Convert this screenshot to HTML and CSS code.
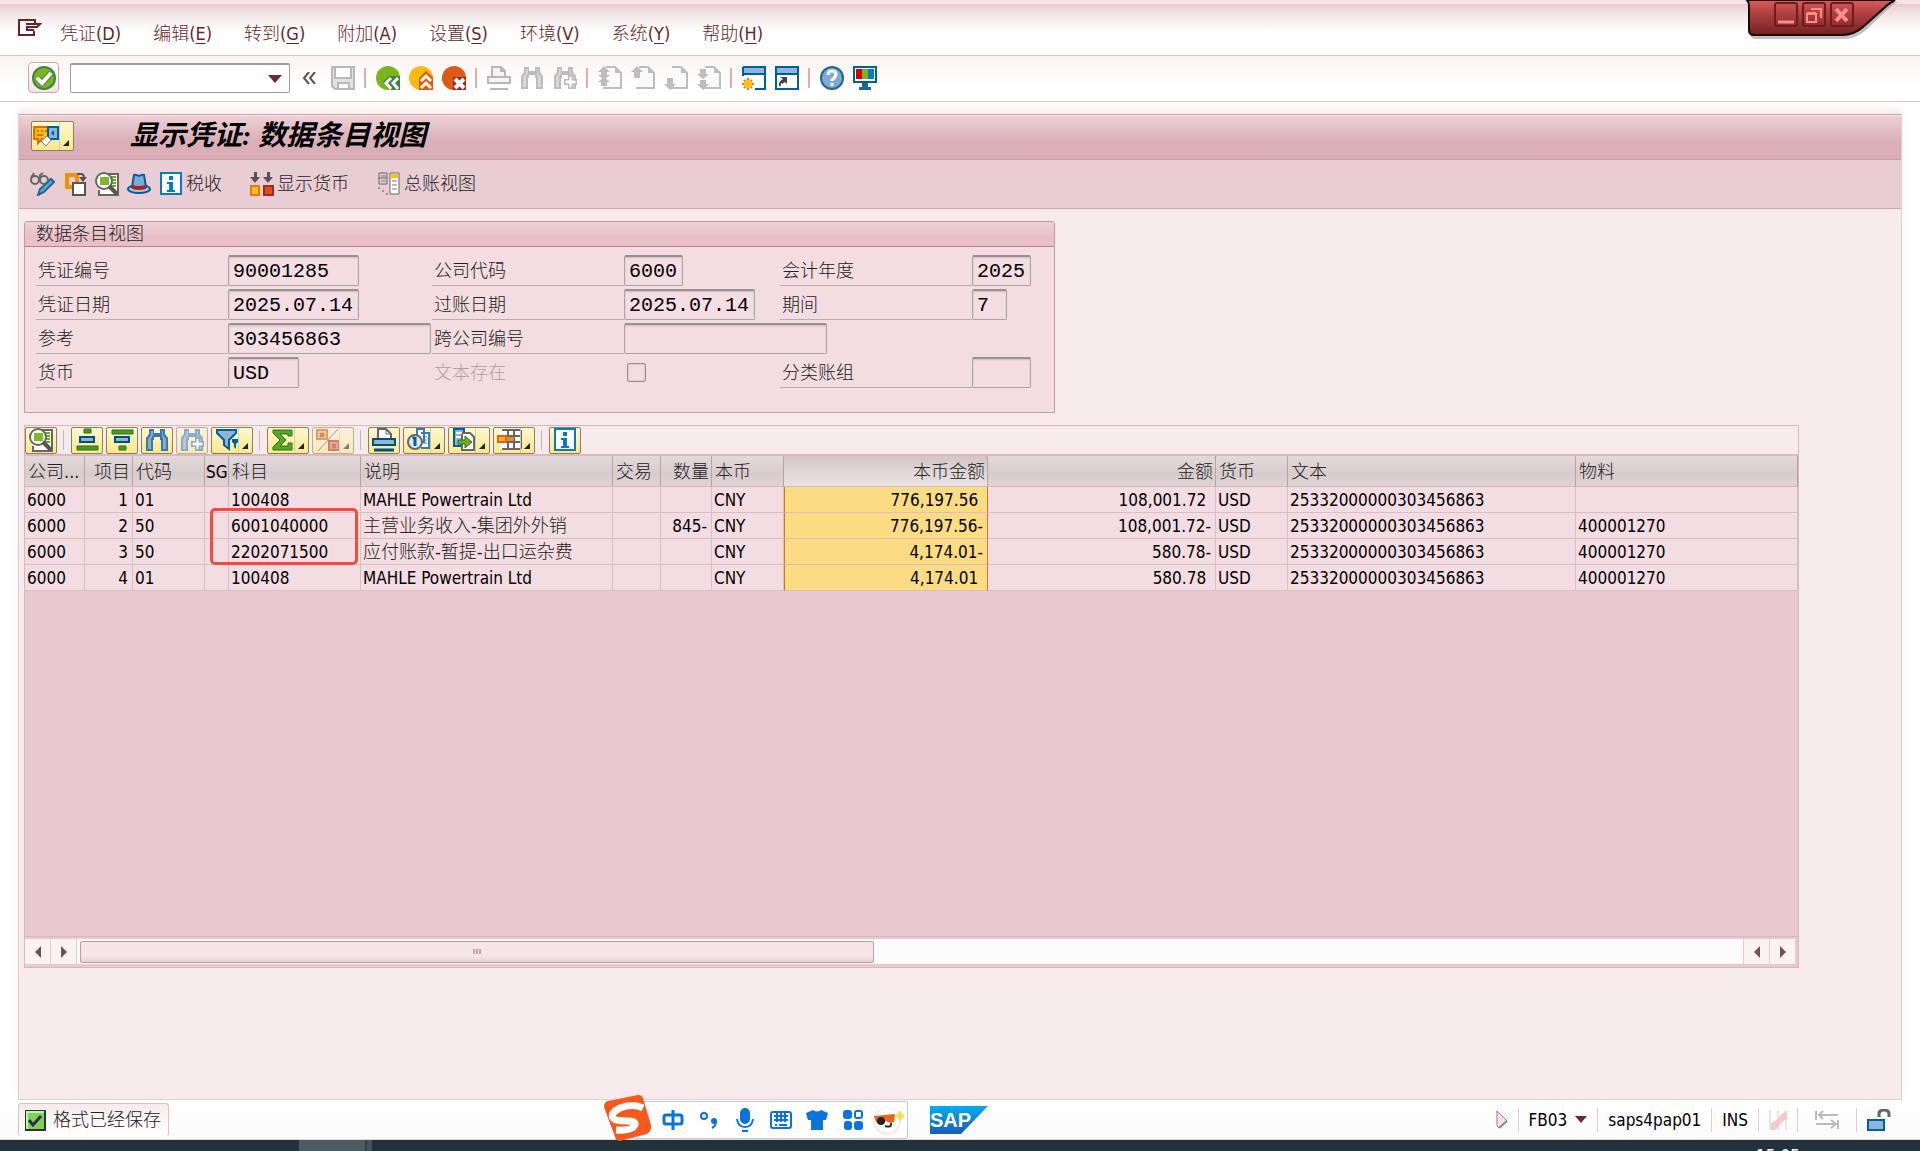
FILE: index.html
```html
<!DOCTYPE html>
<html lang="zh-CN">
<head>
    <meta charset="UTF-8">
    <meta name="viewport" content="width=device-width, initial-scale=1.0">
    <title>显示凭证: 数据条目视图</title>
    <link rel="stylesheet" href="styles.css">
</head>
<body>
    <!-- shared icons -->
    <svg class="sprite" aria-hidden="true">
        <symbol id="binoculars" viewBox="0 0 24 24">
            <path d="M4 1h5v4h6V1h5v5l3 4v13h-7V12h-1V9H9v3H8v11H1V10l3-4z" fill="currentColor"/>
            <path d="M6 3v4L3 11v10h3V11l2-4V3zM17 3v4l1 4v10h3V11l-3-4V3z" fill="#fff" opacity=".4"/>
        </symbol>
        <symbol id="plus" viewBox="0 0 24 24">
            <path d="M15 9h5v4h4v6h-4v4h-5v-4h-4v-6h4z" fill="currentColor"/>
            <path d="M17 11h1v4h4v2h-4v4h-1v-4h-4v-2h4z" fill="#fff" stroke="#fff"/>
        </symbol>
        <symbol id="page" viewBox="0 0 24 24">
            <path d="M8 1h9l6 6v15H5" fill="#fafafa" stroke="#bdbdbd" stroke-width="2"/>
            <path d="M17 1v6h6z" fill="#bdbdbd"/>
        </symbol>
        <symbol id="search" viewBox="0 0 24 24">
            <path d="M12 2h11v21H4v-5" fill="#fff" stroke="#666" stroke-width="2"/>
            <path d="M15 5h6M15 8h6M15 11h6M15 14h6" stroke="#6ab023" stroke-width="2"/>
            <circle cx="9" cy="9" r="8" fill="#fff" stroke="#666" stroke-width="2"/>
            <path d="M5 5h9v8H5z" fill="#7cbb28"/>
            <path d="M14 14l8 8" stroke="#555" stroke-width="4"/>
        </symbol>
        <symbol id="info" viewBox="0 0 24 24">
            <path d="M2 1h20v21H2z" fill="#fff" stroke="#0a7ac0" stroke-width="2"/>
            <path d="M10 4h4v4h-4zM8 10h6v8h2v2H8v-2h2v-6H8z" fill="#0a7ac0"/>
        </symbol>
        <symbol id="left" viewBox="0 0 12 12"><path d="M9 0v12L3 6z" fill="#744e58"/></symbol>
        <symbol id="right" viewBox="0 0 12 12"><path d="M3 0v12l6-6z" fill="#744e58"/></symbol>
    </svg>

    <header class="menubar">
        <button type="button" class="sys" aria-label="系统菜单">
            <svg width="24" height="18" viewBox="0 0 24 18"><path d="M17 4V1H1v15h15v-4M8 5h14l-3 3H9v3h7" fill="none" stroke="#6a2626" stroke-width="2"/></svg>
        </button>
        <nav class="menu">
            <button type="button">凭证<span>(<u>D</u>)</span></button>
            <button type="button">编辑<span>(<u>E</u>)</span></button>
            <button type="button">转到<span>(<u>G</u>)</span></button>
            <button type="button">附加<span>(<u>A</u>)</span></button>
            <button type="button">设置<span>(<u>S</u>)</span></button>
            <button type="button">环境<span>(<u>V</u>)</span></button>
            <button type="button">系统<span>(<u>Y</u>)</span></button>
            <button type="button">帮助<span>(<u>H</u>)</span></button>
        </nav>
        <div class="window-controls">
            <svg class="tab" width="152" height="44" viewBox="0 0 152 44" aria-hidden="true">
                <defs>
                    <linearGradient id="red" x1="0" y1="0" x2="0" y2="1">
                        <stop offset="0" stop-color="#dc5c5c"/>
                        <stop offset=".3" stop-color="#b84646"/>
                        <stop offset="1" stop-color="#741f22"/>
                    </linearGradient>
                </defs>
                <path d="M0 0q4 2 4 8v24q0 7 5 7h89q12 0 22-9l20-19q7-7 12-9z" fill="#999" opacity=".6"/>
                <path d="M0 0q3 1 3 6v24q0 5 5 5h88q12 0 21-8l20-18q6-6 12-9z" fill="url(#red)" stroke="#1c0506" stroke-width="2"/>
            </svg>
            <div class="window-buttons">
                <button type="button" aria-label="最小化"><svg width="22" height="22"><path d="M3 18h16" stroke="#ff8c8c" stroke-width="3"/></svg></button>
                <button type="button" aria-label="还原"><svg width="22" height="22" fill="none" stroke="#ff8c8c" stroke-width="2"><path d="M4 10h9v8H4zM4 9h9M8 5h10v9"/></svg></button>
                <button type="button" aria-label="关闭"><svg width="22" height="22"><path d="M5 5l11 12M16 5L5 17" stroke="#ff8c8c" stroke-width="4"/></svg></button>
            </div>
        </div>
    </header>

    <div class="toolbar">
        <button type="button" class="enter" aria-label="回车">
            <svg width="24" height="24"><circle cx="12" cy="12" r="11" fill="#7ab51d" stroke="#3d8440" stroke-width="2"/><path d="M5 12l5 5 9-10" fill="none" stroke="#3d8440" stroke-width="6"/><path d="M5 12l5 5 9-10" fill="none" stroke="#fff" stroke-width="4"/></svg>
        </button>
        <div class="command">
            <input type="text" aria-label="命令">
            <svg width="14" height="8"><path d="M0 0h14L7 8z" fill="#6e2a2e"/></svg>
        </div>
        <button type="button" class="chevrons" aria-label="收起"><svg width="14" height="12" fill="none" stroke="#555" stroke-width="2"><path d="M7 0L2 6l5 6M13 0L8 6l5 6"/></svg></button>
        <button type="button" aria-label="保存"><svg width="24" height="24"><path d="M1 1h22v22H4l-3-3z" fill="#e2e2e2" stroke="#b8b8b8" stroke-width="2"/><path d="M4 1h16v11H4zM7 17h11v6H7z" fill="#fff" stroke="#b8b8b8" stroke-width="2"/></svg></button>
        <span class="sep"></span>
        <button type="button" aria-label="返回"><svg width="24" height="24"><circle cx="12" cy="12" r="12" fill="#7ab51d"/><path d="M7 16l6-6h11v14H13z" fill="#3d8440"/><path d="M15 12l-5 5 5 6M22 12l-5 5 5 6" fill="none" stroke="#fff" stroke-width="3"/></svg></button>
        <button type="button" aria-label="退出"><svg width="24" height="24"><circle cx="12" cy="12" r="12" fill="#fdb913"/><path d="M10 12l7-7 7 6v13H10z" fill="#e65a0c"/><path d="M12 15l5-5 5 5M12 22l5-5 5 5" fill="none" stroke="#fff" stroke-width="3"/></svg></button>
        <button type="button" aria-label="取消"><svg width="24" height="24"><circle cx="12" cy="12" r="12" fill="#dd5a14"/><path d="M11 11h13v13H11z" fill="#a8281a"/><path d="M13 13l9 9M22 13l-9 9" stroke="#fff" stroke-width="4"/></svg></button>
        <span class="sep"></span>
        <button type="button" aria-label="打印" disabled><svg width="24" height="24" fill="#f4f4f4" stroke="#b8b8b8" stroke-width="2"><path d="M5 11V1h9l4 4v6M14 1v4h4M1 11h22v6H1zM3 23h18"/></svg></button>
        <button type="button" aria-label="查找" disabled><svg width="24" height="24" class="gray"><use href="#binoculars"/></svg></button>
        <button type="button" aria-label="继续查找" disabled><svg width="24" height="24" class="gray"><use href="#binoculars"/><use href="#plus"/></svg></button>
        <span class="sep"></span>
        <button type="button" aria-label="首页" disabled><svg width="24" height="24" class="gray"><use href="#page"/><path d="M6 0l6 6H9v3h3l-6 5-6-5h3V6H0zM6 11l6 5H9v4H3v-4H0z" fill="currentColor"/></svg></button>
        <button type="button" aria-label="上一页" disabled><svg width="24" height="24" class="gray"><use href="#page"/><path d="M6 0l6 6H9v6H3V6H0z" fill="currentColor"/></svg></button>
        <button type="button" aria-label="下一页" disabled><svg width="24" height="24" class="gray"><use href="#page"/><path d="M6 24l6-6H9v-6H3v6H0z" fill="currentColor"/></svg></button>
        <button type="button" aria-label="末页" disabled><svg width="24" height="24" class="gray"><use href="#page"/><path d="M6 13l6-5H9V3H3v5H0zM6 24l6-6H9v-4H3v4H0z" fill="currentColor"/></svg></button>
        <span class="sep"></span>
        <button type="button" aria-label="新建会话"><svg width="24" height="24"><path d="M1 1h22v22H13M1 10V1" fill="#fff" stroke="#00609c" stroke-width="2"/><path d="M2 2h20v5H2z" fill="#8fb5d9"/><path d="M0 8h24" stroke="#00609c" stroke-width="2"/><path d="M6 12v12M0 18h12M2 14l8 8M10 14l-8 8" stroke="#ee7d11" stroke-width="2"/><circle cx="6" cy="18" r="4" fill="#fdc010"/></svg></button>
        <button type="button" aria-label="快捷方式"><svg width="24" height="24"><path d="M1 1h22v22H1z" fill="#fff" stroke="#00609c" stroke-width="2"/><path d="M2 2h20v5H2z" fill="#8fb5d9"/><path d="M0 8h24" stroke="#00609c" stroke-width="2"/><path d="M5 20q-1-4 4-6" fill="none" stroke="#444" stroke-width="2"/><path d="M5 11h7v7l-2-2-3 2-1-3 2-2z" fill="#444"/></svg></button>
        <span class="sep"></span>
        <button type="button" aria-label="帮助"><svg width="24" height="24"><circle cx="12" cy="12" r="11" fill="#7fa9d0" stroke="#20669b" stroke-width="2"/><path d="M8 9q0-4 4-4t4 3-4 6v1M12 17v3" fill="none" stroke="#fff" stroke-width="3"/></svg></button>
        <button type="button" aria-label="布局"><svg width="24" height="24"><path d="M1 1h22v15H1z" fill="#fff" stroke="#00609c" stroke-width="2"/><path d="M3 3h6v10H3z" fill="#d40000"/><path d="M9 3h6v10H9z" fill="#7ab51d"/><path d="M15 3h6v10h-6z" fill="#0a7ac8"/><path d="M9 17h6v4h3v3H6v-3h3z" fill="#20669b"/></svg></button>
    </div>

    <main class="frame">
        <div class="title-bar">
            <button type="button" class="yellow wide" aria-label="对象服务">
                <svg width="26" height="22"><path d="M1 2h14v12H9l-4 4v-4H1z" fill="#fdc010" stroke="#e06a10" stroke-width="2"/><path d="M4 6h2m2 0h2m2 0h2M4 10h6" stroke="#e06a10" stroke-width="2"/><path d="M15 2h10v12H15z" fill="#8fb5d9" stroke="#00609c" stroke-width="2"/><path d="M21 5l-3 3 3 3" fill="#00609c"/><path d="M8 16l6-5 4 4-5 6z" fill="#fff" stroke="#777"/></svg>
                <i></i>
            </button>
            <h1>显示凭证: 数据条目视图</h1>
        </div>

        <div class="app-bar">
            <button type="button" aria-label="显示/更改"><svg width="25" height="24" fill="none" stroke="#666" stroke-width="2"><circle cx="5" cy="8" r="4"/><circle cx="14" cy="8" r="4"/><path d="M1 6l3-5M10 7V3l3-2"/><path d="M8 23l2-6L21 7l3 3-10 10z" fill="#5fa3cf" stroke="#206a98"/></svg></button>
            <button type="button" aria-label="其他凭证"><svg width="24" height="24"><path d="M2 1h14v16H2z" fill="#f39200"/><path d="M6 5h6v8H6z" fill="#e9cdd4"/><path d="M10 11h12v12H10z" fill="#fff" stroke="#555" stroke-width="2"/><path d="M14 2h4q3 0 3 4" fill="none" stroke="#555" stroke-width="2"/><path d="M16 5h8l-4 5z" fill="#555"/></svg></button>
            <button type="button" aria-label="选择单项"><svg width="24" height="24"><use href="#search"/></svg></button>
            <button type="button" aria-label="显示凭证抬头"><svg width="24" height="24"><ellipse cx="12" cy="17" rx="11" ry="4" fill="#a8cbe7" stroke="#00609c" stroke-width="2"/><path d="M5 15L7 3q2-1 5 1 3-2 5-1l2 12z" fill="#79abd5" stroke="#00609c" stroke-width="2"/><path d="M5 13q7 2 14 0v4q-7 2-14 0z" fill="#b02020"/></svg></button>
            <button type="button" class="text-button"><svg width="24" height="24"><use href="#info"/></svg>税收</button>
            <button type="button" class="text-button far"><svg width="24" height="24"><path d="M4 0h3v5h3l-5 6-5-6h4zM17 0h3v5h3l-5 6-5-6h4z" fill="#555"/><path d="M1 14h8v9H1z" fill="#fdc010" stroke="#e67a14" stroke-width="2"/><path d="M14 14h9v9h-9z" fill="#d6531a" stroke="#a8281a" stroke-width="2"/></svg>显示货币</button>
            <button type="button" class="text-button far"><svg width="24" height="24"><path d="M2 1h8v11H2zM2 6h8" fill="none" stroke="#666"/><path d="M13 1h9v21h-9z" fill="#fff" stroke="#666"/><path d="M14 2h7v4h-7z" fill="#fdc010"/><path d="M4 9h5M4 4h5M15 9h5m-5 4h5m-5 4h5" stroke="#777"/><path d="M1 16h2m2 3h2m2 3h2" stroke="#555"/></svg>总账视图</button>
        </div>

        <div class="content">
            <form class="panel">
                <h2>数据条目视图</h2>
                <div class="fields">
                    <div class="field"><label for="doc">凭证编号</label><input id="doc" class="w10" type="text" value="90001285" readonly></div>
                    <div class="field"><label for="comp">公司代码</label><input id="comp" class="w4" type="text" value="6000" readonly></div>
                    <div class="field"><label for="year">会计年度</label><input id="year" class="w4" type="text" value="2025" readonly></div>

                    <div class="field"><label for="docdate">凭证日期</label><input id="docdate" class="w10" type="text" value="2025.07.14" readonly></div>
                    <div class="field"><label for="postdate">过账日期</label><input id="postdate" class="w10" type="text" value="2025.07.14" readonly></div>
                    <div class="field"><label for="period">期间</label><input id="period" class="w2" type="text" value="7" readonly></div>

                    <div class="field"><label for="ref">参考</label><input id="ref" class="w16" type="text" value="303456863" readonly></div>
                    <div class="field"><label for="cross">跨公司编号</label><input id="cross" class="w16" type="text" readonly></div>
                    <div></div>

                    <div class="field"><label for="curr">货币</label><input id="curr" class="w5" type="text" value="USD" readonly></div>
                    <div class="field off"><label for="texts">文本存在</label><input id="texts" type="checkbox" disabled></div>
                    <div class="field"><label for="ledger">分类账组</label><input id="ledger" class="w4" type="text" readonly></div>
                </div>
            </form>

            <section class="alv">
                <div class="alv-bar">
                    <button type="button" class="yellow" aria-label="明细"><svg width="24" height="24"><use href="#search"/></svg></button>
                    <span class="sep"></span>
                    <button type="button" class="yellow" aria-label="升序"><svg width="24" height="24"><path d="M9 1h7v4H9z" fill="#4a9a20" stroke="#2d6e1c"/><path d="M5 9h14v5H5z" fill="#8fb5d9" stroke="#00507c" stroke-width="2"/><path d="M2 18h21v4H2z" fill="#4a9a20" stroke="#2d6e1c"/></svg></button>
                    <button type="button" class="yellow" aria-label="降序"><svg width="24" height="24"><path d="M2 2h21v4H2z" fill="#4a9a20" stroke="#2d6e1c"/><path d="M5 9h14v5H5z" fill="#8fb5d9" stroke="#00507c" stroke-width="2"/><path d="M9 18h7v4H9z" fill="#4a9a20" stroke="#2d6e1c"/></svg></button>
                    <button type="button" class="yellow" aria-label="查找"><svg width="24" height="24" class="blue"><use href="#binoculars"/></svg></button>
                    <button type="button" class="yellow pale" aria-label="继续查找" disabled><svg width="24" height="24" class="blue"><use href="#binoculars"/><use href="#plus"/></svg></button>
                    <button type="button" class="yellow wide" aria-label="过滤"><svg width="24" height="24"><path d="M2 2h19v3l-7 7v9l-5-4v-5L2 5z" fill="#8fb5d9" stroke="#00609c" stroke-width="2"/><path d="M17 11h6v3l-2 2v5l-2-2v-3l-2-2z" fill="#00609c"/></svg><i></i></button>
                    <span class="sep"></span>
                    <button type="button" class="yellow wide" aria-label="总计"><svg width="24" height="24"><path d="M2 2h19v6h-4V6H9l6 6-6 6h8v-3h4v7H2v-3l7-7-7-7z" fill="#5aa81e" stroke="#2d6e1c"/></svg><i></i></button>
                    <button type="button" class="yellow wide pale" aria-label="小计" disabled><svg width="24" height="24"><path d="M1 2h10v9H1z" fill="#fdc010" stroke="#d6531a" stroke-width="2"/><path d="M13 13h10v9H13z" fill="#e67a4a" stroke="#a8281a" stroke-width="2"/><path d="M4 5l4 4m0-4L4 9m12 7l4 4m0-4l-4 4" stroke="#a8281a" stroke-width="2"/><path d="M22 1L2 23" stroke="#555"/></svg><i></i></button>
                    <span class="sep"></span>
                    <button type="button" class="yellow" aria-label="打印"><svg width="24" height="24"><path d="M6 11V1h8l5 5v5" fill="#fff" stroke="#666" stroke-width="2"/><path d="M14 1v5h5" fill="none" stroke="#666"/><path d="M1 11h22v6H1z" fill="#8fb5d9" stroke="#00507c" stroke-width="2"/><path d="M2 22h20" stroke="#00507c" stroke-width="3"/></svg></button>
                    <button type="button" class="yellow wide" aria-label="视图"><svg width="24" height="24"><path d="M10 1h7v13h-7zM14 5h8v15h-8" fill="#fff" stroke="#3979ac" stroke-width="2"/><path d="M16 9h4m-4 3h4m-4 3h4" stroke="#3979ac"/><circle cx="8" cy="14" r="7" fill="#dbe9f4" stroke="#666" stroke-width="2"/><path d="M8 9v9M6 11l2-2" stroke="#00609c" stroke-width="3"/></svg><i></i></button>
                    <button type="button" class="yellow wide" aria-label="导出"><svg width="24" height="24"><path d="M2 1h10v17H2z" fill="#8fb5d9" stroke="#00609c" stroke-width="2"/><path d="M10 5h8l4 4v13H10z" fill="#fff" stroke="#666" stroke-width="2"/><path d="M4 5h6M4 9h5" stroke="#fff" stroke-width="2"/><path d="M6 12h7V8l7 6-7 6v-4H6z" fill="#6ab023" stroke="#2d6e1c"/></svg><i></i></button>
                    <button type="button" class="yellow wide" aria-label="布局"><svg width="25" height="24"><path d="M3 2h21v19H3z" fill="#fff"/><path d="M5 2h19M5 8h19M5 14h19M5 21h19M11 2v19M17 2v19M24 2v19" stroke="#666" stroke-width="2"/><path d="M1 8h8v6H1z" fill="#fdb913" stroke="#e0631a" stroke-width="2"/><path d="M10 9h7v4h-7z" fill="#f18a20"/></svg><i></i></button>
                    <span class="sep"></span>
                    <button type="button" class="yellow" aria-label="信息"><svg width="24" height="24"><use href="#info"/></svg></button>
                </div>

                <div class="grid">
                    <table>
                        <colgroup>
                            <col class="c60"><col class="c48"><col class="c72"><col class="c24"><col class="c132"><col class="c252"><col class="c48"><col class="c51"><col class="c72"><col class="c204"><col class="c228"><col class="c72"><col class="c288"><col>
                        </colgroup>
                        <thead>
                            <tr>
                                <th>公司...</th><th class="num">项目</th><th>代码</th><th class="latin">SG</th><th>科目</th><th>说明</th><th>交易</th><th class="num">数量</th><th>本币</th><th class="num marked">本币金额</th><th class="num">金额</th><th>货币</th><th>文本</th><th>物料</th>
                            </tr>
                        </thead>
                        <tbody>
                            <tr>
                                <td>6000</td><td class="num">1</td><td>01</td><td></td><td>100408</td><td>MAHLE Powertrain Ltd</td><td></td><td></td><td>CNY</td><td class="num marked">776,197.56&nbsp;</td><td class="num">108,001.72&nbsp;</td><td>USD</td><td>25332000000303456863</td><td></td>
                            </tr>
                            <tr>
                                <td>6000</td><td class="num">2</td><td>50</td><td></td><td>6001040000</td><td class="cn">主营业务收入-集团外外销</td><td></td><td class="num">845-</td><td>CNY</td><td class="num marked">776,197.56-</td><td class="num">108,001.72-</td><td>USD</td><td>25332000000303456863</td><td>400001270</td>
                            </tr>
                            <tr>
                                <td>6000</td><td class="num">3</td><td>50</td><td></td><td>2202071500</td><td class="cn">应付账款-暂提-出口运杂费</td><td></td><td></td><td>CNY</td><td class="num marked">4,174.01-</td><td class="num">580.78-</td><td>USD</td><td>25332000000303456863</td><td>400001270</td>
                            </tr>
                            <tr>
                                <td>6000</td><td class="num">4</td><td>01</td><td></td><td>100408</td><td>MAHLE Powertrain Ltd</td><td></td><td></td><td>CNY</td><td class="num marked">4,174.01&nbsp;</td><td class="num">580.78&nbsp;</td><td>USD</td><td>25332000000303456863</td><td>400001270</td>
                            </tr>
                        </tbody>
                    </table>
                    <div class="highlight"></div>
                </div>

                <div class="scrollbar">
                    <button type="button" aria-label="向左"><svg width="12" height="12"><use href="#left"/></svg></button>
                    <button type="button" aria-label="向右"><svg width="12" height="12"><use href="#right"/></svg></button>
                    <div class="track"><div class="thumb"><span></span></div></div>
                    <button type="button" aria-label="向左"><svg width="12" height="12"><use href="#left"/></svg></button>
                    <button type="button" aria-label="向右"><svg width="12" height="12"><use href="#right"/></svg></button>
                </div>
            </section>
        </div>
    </main>

    <footer class="status">
        <div class="message">
            <svg width="21" height="21"><path d="M0 0h21v21H0z" fill="#2c3045"/><path d="M1 1h18v18H1z" fill="#bdf59c"/><path d="M3 3h16v16H3z" fill="#83cf58"/><path d="M4 10l4 5 8-9" fill="none" stroke="#2c3045" stroke-width="3"/></svg>
            格式已经保存
        </div>

        <div class="system">
            <svg width="12" height="19"><path d="M1 1l10 10-8 7-2-2z" fill="#f9e4e8" stroke="#b2707c"/><path d="M3 18l8-7" stroke="#888" stroke-width="2"/></svg>
            <span class="sep"></span>
            <button type="button">FB03<svg width="12" height="8"><path d="M0 0h12L6 7z" fill="#6e2a2e"/></svg></button>
            <span class="sep"></span>
            <span>saps4pap01</span>
            <span class="sep"></span>
            <span>INS</span>
            <span class="sep"></span>
            <svg width="18" height="20"><path d="M1 0v20M9 0v20M17 0v20" stroke="#e8e3e4" stroke-width="2"/><path d="M2 20v-7q4-1 8-6t8-5v7q-3 1-7 6t-6 5z" fill="#f5c7cd"/></svg>
            <span class="sep"></span>
            <svg class="tabs" width="24" height="20" fill="none" stroke="#bbb" stroke-width="2"><path d="M1 1v9M3 5h20M8 1L4 5l4 4M23 10v9M1 14h20M16 10l5 4-5 4"/></svg>
            <span class="sep"></span>
            <svg width="24" height="22"><path d="M12 8V5q0-4 5-4t5 4v3" fill="none" stroke="#666" stroke-width="3"/><path d="M1 11h16v10H1z" fill="#8fb5d9" stroke="#00609c" stroke-width="2"/></svg>
        </div>

        <!-- floating input method bar and logo -->
        <div class="ime">
            <svg class="s-logo" width="48" height="46"><path d="M4 6L34 0q4 0 5 3l8 27q1 6-4 9l-27 7q-4 0-5-4L0 12q0-5 4-6z" fill="#f55a1c"/><path d="M39 13Q29 8 16 13q-10 5-7 10 2 3 14 3 9 0 8 4-3 6-19 5" fill="none" stroke="#fff" stroke-width="7"/></svg>
            <div class="ime-icons">
                <svg width="22" height="22" fill="none" stroke="#0a74dc" stroke-width="3"><rect x="2" y="6" width="18" height="9" rx="2"/><path d="M11 1v20"/></svg>
                <svg width="18" height="22"><circle cx="4" cy="7" r="3" fill="none" stroke="#0a74dc" stroke-width="2"/><circle cx="14" cy="12" r="3" fill="#0a74dc"/><path d="M16 12q0 5-4 7" fill="none" stroke="#0a74dc" stroke-width="2"/></svg>
                <svg width="18" height="24" fill="none" stroke="#0a74dc" stroke-width="2"><rect x="5" y="1" width="8" height="14" rx="4" fill="#0a74dc"/><path d="M1 11q1 8 8 8t8-8M6 23h6"/></svg>
                <svg width="22" height="20" fill="none" stroke="#0a74dc" stroke-width="2"><rect x="1" y="2" width="20" height="16" rx="2"/><path d="M4 6h14M4 10h14M7 3v9M11 3v9M15 3v9M5 15h2m2 0h8"/></svg>
                <svg width="22" height="22"><path d="M7 1q4 3 8 0l7 3-2 7h-3v10H5V11H2L0 4z" fill="#0a74dc"/></svg>
                <svg width="20" height="20" fill="#0a74dc"><rect width="9" height="9" rx="3"/><rect x="1" y="11" width="8" height="9" rx="3"/><rect x="11" y="11" width="9" height="9" rx="3"/><rect x="12" y="1" width="7" height="7" rx="2" fill="none" stroke="#0a74dc" stroke-width="2"/></svg>
                <svg width="32" height="30"><circle cx="14" cy="16" r="14" fill="#f7ecec"/><circle cx="14" cy="15" r="12" fill="#fff"/><path d="M1 11q10-1 21-2l-1 8q-5 2-8-1-5 4-10 1z" fill="#ec641c"/><circle cx="8" cy="16" r="4" fill="#29231f"/><path d="M12 21q7 2 6-3" fill="none" stroke="#333" stroke-width="2"/><path d="M27 5l2 4 3 2-3 2-2 4-2-4-3-2 3-2z" fill="#fddc45"/></svg>
            </div>
        </div>
        <svg class="sap" width="58" height="28" viewBox="0 0 58 28" role="img" aria-label="SAP">
            <defs>
                <linearGradient id="sapblue" x1="0" y1="0" x2="0" y2="1"><stop offset="0" stop-color="#00aeef"/><stop offset="1" stop-color="#1f5bb8"/></linearGradient>
            </defs>
            <path d="M0 0h58L31 28H0z" fill="url(#sapblue)"/>
            <text x="0" y="21" class="sap-text">SAP</text>
        </svg>
    </footer>

    <div class="taskbar"><span class="task"></span><span class="clock">15:05</span></div>
</body>
</html>
```

FILE: styles.css
```css
*{
    margin: 0;
    padding: 0;
    box-sizing: border-box;
}

body{
    display: flex;
    flex-direction: column;
    height: 100vh;
    overflow: hidden;
    background-color: #fff;
    color: #222;
    font-family: "DejaVu Sans Condensed", "Noto Sans CJK SC", sans-serif;
    font-size: 18px;
    font-weight: 300;
    line-height: 24px;
}

button{
    display: flex;
    align-items: center;
    justify-content: center;
    background: transparent;
    border: none;
    font: inherit;
    color: inherit;
}

svg{
    display: block;
    flex: none;
}

.sprite{
    position: absolute;
    width: 0;
    height: 0;
}

.gray{
    color: #bdbdbd;
}

.blue{
    color: #3979ac;
}

/* menu */
.menubar{
    position: relative;
    display: flex;
    align-items: center;
    height: 56px;
    flex: none;
    padding-left: 18px;
    border-top: 4px solid #f8e4e6;
    border-bottom: 1px solid #d8c4c8;
    background: linear-gradient(#ebcacc, #f4eaea 12px, #fff 28px);
    color: #6a2626;
}

.sys{
    margin-bottom: 4px;
}

.menu{
    display: flex;
    gap: 32px;
    margin-left: 18px;
    padding-top: 9px;
}

.menu u{
    text-underline-offset: 3px;
}

.window-controls{
    position: absolute;
    top: -4px;
    right: 22px;
}

.window-buttons{
    position: absolute;
    top: 2px;
    left: 28px;
    display: flex;
    gap: 4px;
}

.window-buttons button{
    width: 24px;
    height: 25px;
    border: 2px solid #701a1e;
    border-radius: 3px;
}

/* standard toolbar */
.toolbar{
    display: flex;
    align-items: center;
    gap: 9px;
    height: 46px;
    flex: none;
    padding: 0 0 2px 28px;
    border-bottom: 1px solid #d8c8ca;
    background: linear-gradient(#faf3f3, #fff 30px);
}

.toolbar .sep{
    width: 2px;
    height: 20px;
    margin-right: 1px;
    background-color: #e0acb4;
}

.enter{
    width: 31px;
    height: 31px;
    border: 1px solid #d3a5aa;
    border-radius: 4px;
    background: linear-gradient(#fff, #f6e4e6);
}

.command{
    position: relative;
    margin-left: 2px;
}

.command input{
    display: block;
    width: 220px;
    height: 30px;
    border: 1px solid #a09a9b;
    border-top-width: 2px;
    border-radius: 2px;
    padding: 0 24px 0 4px;
    background-color: #fff;
    font-size: 18px;
}

.command svg{
    position: absolute;
    right: 8px;
    top: 12px;
}

.chevrons{
    margin: 0 6px 0 3px;
}

/* main window */
.frame{
    flex: 1;
    display: flex;
    flex-direction: column;
    margin: 12px 18px 0;
    border: 1px solid #e2cfd2;
    border-top-color: #cf9fa9;
    background-color: #f6eaec;
    box-shadow: 0 -6px 8px #f8eeee;
}

.title-bar{
    display: flex;
    align-items: center;
    height: 45px;
    padding: 0 0 3px 12px;
    gap: 56px;
    border-top: 1px solid #f8e6e9;
    border-bottom: 1px solid #c79ca5;
    background: linear-gradient(#eed0d6, #dbb0b9 24px, #dbacb6);
}

h1{
    font-size: 28px;
    line-height: 36px;
    font-style: italic;
    font-weight: bold;
    color: #000;
    font-family: "Liberation Serif", "Noto Sans CJK SC", serif;
}

.yellow{
    width: 32px;
    height: 27px;
    border: 1px solid #8c8058;
    border-radius: 2px;
    background: linear-gradient(#fdf8d0, #fbe88c);
}

.yellow.wide{
    position: relative;
    width: 42px;
    justify-content: flex-start;
    padding-left: 3px;
}

.title-bar .yellow{
    height: 30px;
    width: 43px;
    padding-left: 1px;
}

.yellow i{
    position: absolute;
    top: 0;
    bottom: 0;
    right: 0;
    width: 14px;
    border-left: 1px solid #b9d6bb;
}

.yellow i::after{
    content: "";
    position: absolute;
    right: 4px;
    bottom: 4px;
    border: 3px solid #222;
    border-top-color: transparent;
    border-left-color: transparent;
}

.pale{
    opacity: 0.55;
}

.app-bar{
    display: flex;
    align-items: center;
    gap: 8px;
    height: 49px;
    padding-left: 11px;
    border-bottom: 1px solid #cfa6ae;
    background-color: #e9cdd4;
}

.text-button{
    gap: 3px;
}

.far{
    margin-left: 20px;
}

.content{
    flex: 1;
    display: flex;
    flex-direction: column;
    align-items: flex-start;
    padding: 12px 102px 131px 5px;
}

/* header data */
.panel{
    border: 1px solid #cf929e;
    border-radius: 3px 3px 0 0;
    background-color: #f4dde1;
}

.panel h2{
    height: 25px;
    padding-left: 11px;
    border-bottom: 1px solid #c2808c;
    background: linear-gradient(#efd2d7, #e9c0c8 14px);
    font-size: 18px;
    line-height: 24px;
    font-weight: 300;
}

.fields{
    display: grid;
    grid-template-columns: 396px 348px auto;
    grid-auto-rows: 31px;
    row-gap: 3px;
    padding: 8px 23px 24px 11px;
}

.field{
    display: flex;
}

.field label{
    flex: none;
    width: 192px;
    padding: 4px 0 0 2px;
    border-bottom: 1px solid #b9aeb0;
}

.field input[type="text"]{
    flex: none;
    height: 31px;
    padding-left: 4px;
    border: 1px solid #a9a3a4;
    border-top: 2px solid #979192;
    border-radius: 2px;
    background-color: #f4dde3;
    box-shadow: inset 0 1px 2px #cfbfc2;
    font-family: "Liberation Mono", "Noto Sans CJK SC", monospace;
    font-size: 20px;
    color: #000;
}

.field .w2{
    width: 35px;
}

.field .w4{
    width: 59px;
}

.field .w5{
    width: 71px;
}

.field .w10{
    width: 131px;
}

.field .w16{
    width: 203px;
}

.off label{
    border: none;
    color: #b09fa2;
}

.field input[type="checkbox"]{
    appearance: none;
    width: 19px;
    height: 19px;
    margin: 6px 3px;
    border: 1px solid #998c8e;
    border-radius: 2px;
    box-shadow: inset 0 0 2px #b9a7aa;
}

/* item list */
.alv{
    flex: 1;
    align-self: stretch;
    display: flex;
    flex-direction: column;
    margin-top: 12px;
    border: 1px solid #d5b9be;
    background-color: #e9c9cf;
}

.alv-bar{
    display: flex;
    align-items: center;
    gap: 3px;
    height: 30px;
    border-bottom: 2px solid #dcb9c0;
    background-color: #f6eaec;
}

.alv-bar .sep{
    width: 8px;
    height: 20px;
    border-right: 4px solid transparent;
    background: linear-gradient(#c2b7b9, #c2b7b9) right / 1px 100% no-repeat;
    background-clip: padding-box;
}

.grid{
    position: relative;
    flex: 1;
    border-bottom: 1px solid #d7b5bb;
}

table{
    width: 100%;
    table-layout: fixed;
    border-collapse: separate;
    border-spacing: 0;
}

.c24{
    width: 24px;
}

.c48{
    width: 48px;
}

.c51{
    width: 51px;
}

.c60{
    width: 60px;
}

.c72{
    width: 72px;
}

.c132{
    width: 132px;
}

.c204{
    width: 204px;
}

.c228{
    width: 228px;
}

.c252{
    width: 252px;
}

.c288{
    width: 288px;
}

th{
    height: 31px;
    padding: 1px 2px 0 3px;
    border-right: 1px solid #b9a2a6;
    border-bottom: 1px solid #cdb7bb;
    background: linear-gradient(#e4dadb, #d8cbcd 18px, #e0d5d6);
    font-weight: 300;
    text-align: left;
    white-space: nowrap;
    overflow: hidden;
}

th.latin{
    padding: 1px 0 0 1px;
    font-size: 17px;
    color: #000;
}

th.marked{
    background: linear-gradient(#d3c5c8, #e0d6d7 15px, #e9e1e2);
}

td{
    height: 26px;
    padding: 0 2px;
    border-right: 1px solid #d7bfc4;
    border-bottom: 1px solid #d7bfc4;
    background-color: #f4dde2;
    color: #000;
    font-size: 17px;
    white-space: nowrap;
}

td.cn{
    font-size: 18px;
    color: #222;
}

.num{
    text-align: right;
}

td.num{
    padding-right: 4px;
}

td.marked{
    background-color: #fcdc82;
    border-left: 1px solid #c87828;
    border-right: 1px solid #c87828;
}

.highlight{
    position: absolute;
    top: 52px;
    left: 185px;
    width: 148px;
    height: 57px;
    border: 3px solid #f24c3e;
    border-radius: 5px;
}

.scrollbar{
    display: flex;
    height: 30px;
    padding: 2px 2px 3px 0;
}

.scrollbar button{
    width: 26px;
    border-right: 1px solid #e9c9cf;
    background-color: #faf2f3;
}

.track{
    flex: 1;
    padding: 2px 2px 2px 3px;
    border-right: 1px solid #e9c9cf;
    background-color: #fbfbfb;
}

.thumb{
    display: flex;
    align-items: center;
    justify-content: center;
    width: 794px;
    max-width: 100%;
    height: 22px;
    border: 1px solid #b99fa4;
    border-radius: 2px;
    background: linear-gradient(#f5e5e6 14px, #eacfd5);
}

.thumb span{
    width: 9px;
    height: 6px;
    background: linear-gradient(90deg, #c2a4a9 2px, transparent 2px) 0 0 / 3px 3px;
    border-bottom: 1px solid #f5e5e6;
}

/* status bar */
.status{
    position: relative;
    display: flex;
    align-items: center;
    justify-content: space-between;
    height: 40px;
    flex: none;
    padding: 0 29px 0 18px;
    border-bottom: 1px solid #ddd;
    background: linear-gradient(#fff, #fafafa);
    color: #000;
}

.message{
    display: flex;
    align-items: center;
    gap: 7px;
    height: 33px;
    padding: 0 7px 0 6px;
    border: 1px solid #dcc0c5;
    border-bottom: none;
    border-radius: 3px;
    background: linear-gradient(#f6eaec, #fff);
    color: #222;
}

.system{
    display: flex;
    align-items: center;
    gap: 10px;
    font-size: 17px;
}

.system .sep{
    width: 1px;
    height: 24px;
    background-color: #dacfd1;
}

.system button{
    gap: 8px;
}

.system .tabs{
    margin: 0 7px;
}

.ime{
    position: absolute;
    left: 604px;
    top: -5px;
    display: flex;
    z-index: 1;
}

.s-logo{
    z-index: 1;
}

.ime-icons{
    display: grid;
    grid-template-columns: repeat(7, 36px);
    align-items: center;
    justify-items: center;
    height: 38px;
    margin: 6px 0 0 -20px;
    padding-left: 22px;
    border: 1px solid #bccbdc;
    border-radius: 2px;
    background-color: #fff;
}

.sap{
    position: absolute;
    left: 930px;
    top: 6px;
}

.sap-text{
    font-family: "Liberation Sans", sans-serif;
    font-size: 20px;
    font-weight: bold;
    fill: #fff;
}

.taskbar{
    display: flex;
    justify-content: space-between;
    height: 11px;
    flex: none;
    overflow: hidden;
    padding: 0 120px 0 299px;
    background-color: #22313a;
    color: #fff;
}

.task{
    width: 73px;
    background: linear-gradient(90deg, #4e5b63 66px, #333f46 66px, #333f46 68px, #46525a 68px);
}

.clock{
    padding-top: 4px;
    font-size: 17px;
}
```
